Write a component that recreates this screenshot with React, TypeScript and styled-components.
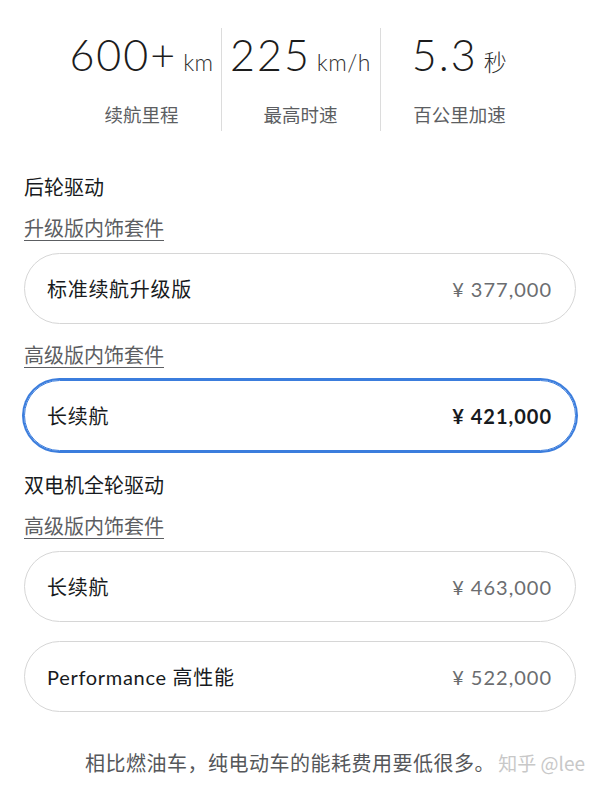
import React from 'react';
import styled, { createGlobalStyle } from 'styled-components';

interface statPreset {
  value: string;
  unit: string;
  label: string;
}

interface trimPreset {
  name: string;
  price: string;
  selected?: boolean;
}

interface groupPreset {
  drive: string;
  packages: { title: string; trims: trimPreset[] }[];
}

const stats: statPreset[] = [
  { value: '600+', unit: 'km', label: '续航里程' },
  { value: '225', unit: 'km/h', label: '最高时速' },
  { value: '5.3', unit: '秒', label: '百公里加速' },
];

const groups: groupPreset[] = [
  {
    drive: '后轮驱动',
    packages: [
      {
        title: '升级版内饰套件',
        trims: [{ name: '标准续航升级版', price: '¥ 377,000' }],
      },
      {
        title: '高级版内饰套件',
        trims: [{ name: '长续航', price: '¥ 421,000', selected: true }],
      },
    ],
  },
  {
    drive: '双电机全轮驱动',
    packages: [
      {
        title: '高级版内饰套件',
        trims: [
          { name: '长续航', price: '¥ 463,000' },
          { name: 'Performance 高性能', price: '¥ 522,000' },
        ],
      },
    ],
  },
];

const App: React.FC = (): JSX.Element => {
  return (
    <>
      <GlobalStyle />
      <StPage>
        <StStats>
          {stats.map((stat, index) => (
            <StStat key={index} divided={index !== 0}>
              <StValue>
                {stat.value}
                <StUnit>{stat.unit}</StUnit>
              </StValue>
              <StLabel>{stat.label}</StLabel>
            </StStat>
          ))}
        </StStats>

        {groups.map((group, gi) => (
          <StGroup key={gi}>
            <StDrive>{group.drive}</StDrive>
            {group.packages.map((pkg, pi) => (
              <StPackage key={pi}>
                <StPackageTitle>{pkg.title}</StPackageTitle>
                <StTrimList>
                  {pkg.trims.map((trim, ti) => (
                    <StTrim key={ti} selected={!!trim.selected}>
                      <span>{trim.name}</span>
                      <StPrice selected={!!trim.selected}>{trim.price}</StPrice>
                    </StTrim>
                  ))}
                </StTrimList>
              </StPackage>
            ))}
          </StGroup>
        ))}

        <StFooter>
          相比燃油车，纯电动车的能耗费用要低很多。
          <StWatermark>知乎 @lee</StWatermark>
        </StFooter>
      </StPage>
    </>
  );
};

export default App;

const GlobalStyle = createGlobalStyle`
  html, body {
    margin: 0;
    padding: 0;
    background: #ffffff;
  }
  body {
    font-family: Lato, 'Noto Sans CJK SC', sans-serif;
    color: #171a20;
  }
`;

const StPage = styled.div`
  width: 600px;
  height: 787px;
  box-sizing: border-box;
  padding: 28px 24px 0 24px;
  display: flex;
  flex-direction: column;
  overflow: hidden;
`;

const StStats = styled.div`
  display: grid;
  grid-template-columns: repeat(3, 159px);
  justify-content: center;
`;

const StStat = styled.div<{ divided: boolean }>`
  display: flex;
  flex-direction: column;
  align-items: center;
  height: 103px;
  border-left: 1px solid ${({ divided }) => (divided ? '#dcdcdc' : 'transparent')};
`;

const StValue = styled.div`
  display: flex;
  align-items: baseline;
  height: 54px;
  line-height: 54px;
  font-size: 43px;
  font-weight: 300;
  letter-spacing: 2px;
  color: #1c1c1c;
  white-space: nowrap;
`;

const StUnit = styled.span`
  margin-left: 6px;
  font-size: 23px;
  font-weight: 300;
  letter-spacing: 0.5px;
  color: #2e2e2e;
  font-family: Lato, 'Noto Sans CJK SC', sans-serif;
`;

const StLabel = styled.div`
  margin-top: 19px;
  line-height: 26px;
  font-size: 18.5px;
  color: #5c5e62;
  font-family: 'Noto Sans CJK SC', sans-serif;
`;

const StGroup = styled.div`
  display: flex;
  flex-direction: column;
  margin-top: 42px;

  & + & {
    margin-top: 20px;
  }
`;

const StDrive = styled.div`
  line-height: 28px;
  font-size: 20px;
  color: #171a20;
  font-family: 'Noto Sans CJK SC', sans-serif;
`;

const StPackage = styled.div`
  display: flex;
  flex-direction: column;
  margin-top: 13px;

  & + & {
    margin-top: 17px;
  }
`;

const StPackageTitle = styled.div`
  line-height: 28px;
  font-size: 20px;
  color: #5c5e62;
  text-decoration: underline;
  text-underline-offset: 4px;
  text-decoration-thickness: 1px;
  font-family: 'Noto Sans CJK SC', sans-serif;
`;

const StTrimList = styled.div`
  display: flex;
  flex-direction: column;
  gap: 19px;
  margin-top: 11px;
`;

const StTrim = styled.div<{ selected: boolean }>`
  display: flex;
  justify-content: space-between;
  align-items: center;
  height: 71px;
  box-sizing: border-box;
  padding: 0 23px 0 22px;
  border-radius: 36px;
  border: 1px solid ${({ selected }) => (selected ? '#3b7ddd' : '#d6d6d6')};
  box-shadow: ${({ selected }) => (selected ? '0 0 0 2px #3b7ddd' : 'none')};
  font-size: 20px;
  color: #171a20;
  font-family: Lato, 'Noto Sans CJK SC', sans-serif;
  letter-spacing: 0.7px;
`;

const StPrice = styled.span<{ selected: boolean }>`
  color: ${({ selected }) => (selected ? '#171a20' : '#6b6d70')};
  font-weight: ${({ selected }) => (selected ? 700 : 400)};
  letter-spacing: 1px;
`;

const StFooter = styled.div`
  position: relative;
  display: flex;
  justify-content: center;
  margin-top: 37px;
  padding-right: 20px;
  line-height: 28px;
  font-size: 20px;
  letter-spacing: 0.5px;
  color: #55575a;
  font-family: 'Noto Sans CJK SC', sans-serif;
`;

const StWatermark = styled.span`
  position: absolute;
  right: -9px;
  top: 0;
  font-size: 19px;
  letter-spacing: 0;
  color: #c8c8c8;
  font-family: 'Noto Sans CJK SC', sans-serif;
`;
